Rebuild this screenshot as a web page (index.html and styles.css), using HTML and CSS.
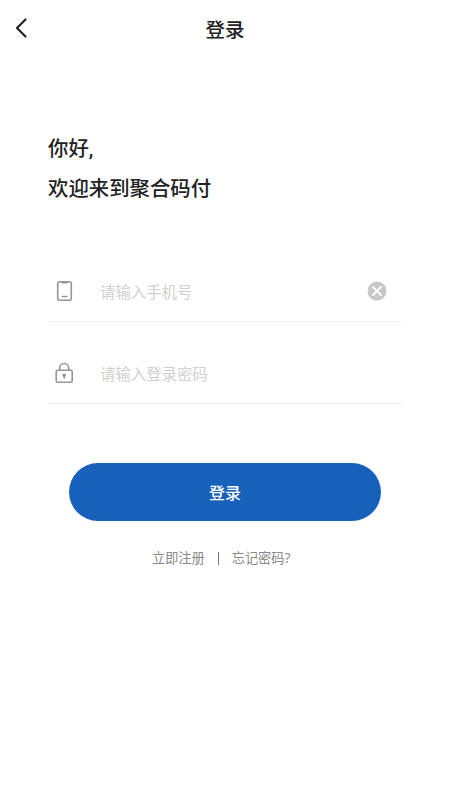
FILE: index.html
```html
<!DOCTYPE html>
<html lang="zh-CN">
<head>
<meta charset="utf-8">
<meta name="viewport" content="width=device-width, initial-scale=1">
<title>登录</title>
<link rel="stylesheet" href="styles.css">
</head>
<body>
<header class="bar">
  <button class="back" aria-label="返回"><svg width="14" height="22" viewBox="0 0 14 22"><path d="m11.5 2.5-8.5 8.5 8.5 8.5"/></svg></button>
  <h1>登录</h1>
</header>
<main>
  <h2 class="welcome"><span>你好<span class="comma">,</span></span><span>欢迎来到聚合码付</span></h2>
  <form>
    <label class="field phone">
      <svg class="icon" width="18" height="22" viewBox="0 0 18 22"><rect x="2.7" y="1.7" width="13.6" height="18.6" rx="2"/><path d="M7 2.7h5M7.3 16.5h4.4"/></svg>
      <span class="hint">请输入手机号</span>
      <svg class="clear" width="20" height="20" viewBox="0 0 20 20"><circle cx="10" cy="10" r="9.5"/><path d="m6 6 8 8m0-8-8 8"/></svg>
    </label>
    <label class="field password">
      <svg class="icon" width="18" height="22" viewBox="0 0 18 22"><rect x="1.2" y="8.3" width="16" height="12" rx="1.5"/><path d="M4.7 8V6a4.5 4.5 0 0 1 9 0v2M9.2 13.5v2.5"/><circle class="dot" cx="9.2" cy="13.3" r="1.7"/></svg>
      <span class="hint">请输入登录密码</span>
    </label>
    <button class="submit" type="button">登录</button>
  </form>
  <nav class="links"><span>立即注册</span><i></i><span>忘记密码<span class="mark">?</span></span></nav>
</main>
</body>
</html>
```
FILE: styles.css
```css
* { box-sizing: border-box; }
body { margin: 0; background: #fff; color: #222; font-family: "Noto Sans CJK SC", sans-serif; }
button { font-family: inherit; border: 0; padding: 0; }
svg { display: block; flex: none; fill: none; stroke-linecap: round; stroke-linejoin: round; }
.bar { display: grid; grid-template-columns: 60px 1fr 60px; height: 56px; align-items: center; }
.back { background: none; padding-left: 14px; }
.back svg { stroke: #222; stroke-width: 2.2; }
h1 { margin: 0; padding-top: 1px; text-align: center; font-size: 19.5px; line-height: 28px; font-weight: 500; }
main { padding: 71px 48px 0; }
.welcome { display: flex; flex-direction: column; margin: 0; font-size: 20.4px; line-height: 40px; font-weight: 500; }
.comma { font-family: Roboto, sans-serif; line-height: 1; }
.field { display: flex; align-items: center; height: 60px; padding-bottom: 1px; border-bottom: 1px solid #eee; }
.phone { margin-top: 55px; }
.password { margin-top: 22px; }
.icon { margin-left: 7px; stroke: #969696; stroke-width: 1.6; }
.dot { fill: #969696; stroke: none; }
.hint { flex: 1; margin-left: 27px; color: #d0d0d0; font-size: 15.4px; }
.clear { margin-right: 15px; fill: #c8c8c8; stroke: #fff; stroke-width: 1.8; }
.clear circle { stroke: none; }
.submit { display: block; width: 312px; height: 58px; margin: 59px 0 0 21px; border-radius: 29px; background: #1761bb; color: #fff; font-size: 16px; font-weight: 500; }
.links { display: flex; align-items: center; margin: 27px 0 0 104px; color: #888; font-size: 13.2px; line-height: 20px; }
.links i { width: 1px; height: 13px; margin: 0 13px; background: #777; }
.mark { font-family: "Open Sans", sans-serif; font-size: 14px; line-height: 1; }
```
